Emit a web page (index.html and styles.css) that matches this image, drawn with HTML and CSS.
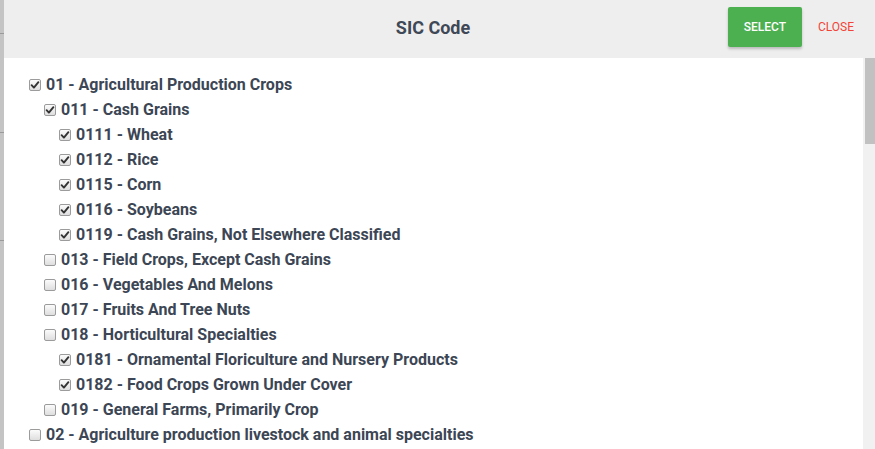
FILE: index.html
```html
<!DOCTYPE html>
<html>
<head>
<meta charset="utf-8">
<link rel="stylesheet" href="styles.css">
</head>
<body>
<div class="backdrop">
  <div class="bg-line l1"></div>
  <div class="bg-line l2"></div>
  <div class="bg-line l3"></div>
</div>
<div class="modal">
  <header class="head">
    <div></div>
    <h1 class="title">SIC Code</h1>
    <div class="actions">
      <button class="btn-select">SELECT</button>
      <button class="btn-close">CLOSE</button>
    </div>
  </header>
  <div class="body">
    <div class="content">
      <ul class="tree">
        <li>
          <label class="row"><span class="cb on"><svg viewBox="0 0 12 12" width="12" height="12"><path d="M2.6 6.2 L4.9 8.6 L9.4 3.2"/></svg></span><span class="txt">01 - Agricultural Production Crops</span></label>
          <ul class="sub">
            <li>
              <label class="row"><span class="cb on"><svg viewBox="0 0 12 12" width="12" height="12"><path d="M2.6 6.2 L4.9 8.6 L9.4 3.2"/></svg></span><span class="txt">011 - Cash Grains</span></label>
              <ul class="sub">
                <li><label class="row"><span class="cb on"><svg viewBox="0 0 12 12" width="12" height="12"><path d="M2.6 6.2 L4.9 8.6 L9.4 3.2"/></svg></span><span class="txt">0111 - Wheat</span></label></li>
                <li><label class="row"><span class="cb on"><svg viewBox="0 0 12 12" width="12" height="12"><path d="M2.6 6.2 L4.9 8.6 L9.4 3.2"/></svg></span><span class="txt">0112 - Rice</span></label></li>
                <li><label class="row"><span class="cb on"><svg viewBox="0 0 12 12" width="12" height="12"><path d="M2.6 6.2 L4.9 8.6 L9.4 3.2"/></svg></span><span class="txt">0115 - Corn</span></label></li>
                <li><label class="row"><span class="cb on"><svg viewBox="0 0 12 12" width="12" height="12"><path d="M2.6 6.2 L4.9 8.6 L9.4 3.2"/></svg></span><span class="txt">0116 - Soybeans</span></label></li>
                <li><label class="row"><span class="cb on"><svg viewBox="0 0 12 12" width="12" height="12"><path d="M2.6 6.2 L4.9 8.6 L9.4 3.2"/></svg></span><span class="txt">0119 - Cash Grains, Not Elsewhere Classified</span></label></li>
              </ul>
            </li>
            <li><label class="row"><span class="cb"></span><span class="txt">013 - Field Crops, Except Cash Grains</span></label></li>
            <li><label class="row"><span class="cb"></span><span class="txt">016 - Vegetables And Melons</span></label></li>
            <li><label class="row"><span class="cb"></span><span class="txt">017 - Fruits And Tree Nuts</span></label></li>
            <li>
              <label class="row"><span class="cb"></span><span class="txt">018 - Horticultural Specialties</span></label>
              <ul class="sub">
                <li><label class="row"><span class="cb on"><svg viewBox="0 0 12 12" width="12" height="12"><path d="M2.6 6.2 L4.9 8.6 L9.4 3.2"/></svg></span><span class="txt">0181 - Ornamental Floriculture and Nursery Products</span></label></li>
                <li><label class="row"><span class="cb on"><svg viewBox="0 0 12 12" width="12" height="12"><path d="M2.6 6.2 L4.9 8.6 L9.4 3.2"/></svg></span><span class="txt">0182 - Food Crops Grown Under Cover</span></label></li>
              </ul>
            </li>
            <li><label class="row"><span class="cb"></span><span class="txt">019 - General Farms, Primarily Crop</span></label></li>
          </ul>
        </li>
        <li><label class="row"><span class="cb"></span><span class="txt">02 - Agriculture production livestock and animal specialties</span></label></li>
      </ul>
    </div>
    <div class="scrollbar"><div class="thumb"></div></div>
  </div>
</div>
</body>
</html>
```
FILE: styles.css
```css
* { box-sizing: border-box; }
html, body { margin: 0; padding: 0; height: 100%; overflow: hidden; }
body {
  display: flex;
  font-family: Roboto, "Liberation Sans", sans-serif;
  background: #c2c2c2;
}
.backdrop {
  width: 4px;
  flex: none;
  background: #c4c4c4;
  display: flex;
  flex-direction: column;
}
.bg-line { height: 1px; background: #9a9a9a; }
.l1 { margin-top: 33px; }
.l2 { margin-top: 98px; }
.l3 { margin-top: 107px; }
.modal {
  flex: 1;
  height: 449px;
  display: flex;
  flex-direction: column;
  background: #fff;
  min-width: 0;
}
.head {
  height: 58px;
  flex: none;
  background: #eeeeee;
  display: grid;
  grid-template-columns: 1fr auto 1fr;
  align-items: center;
  padding: 0 21px 0 8px;
}
.title {
  margin: 0;
  font-size: 18px;
  font-weight: 700;
  color: #3e4856;
  padding-bottom: 3px;
}
.actions {
  display: flex;
  justify-content: flex-end;
  align-items: center;
  gap: 16px;
  padding-bottom: 4px;
}
.btn-select {
  font-family: Roboto, "Liberation Sans", sans-serif;
  width: 74px;
  height: 40px;
  border: none;
  border-radius: 2px;
  background: #4caf50;
  color: #fff;
  font-size: 12px;
  font-weight: 500;
  box-shadow: 0 2px 3px rgba(0,0,0,0.22);
  padding: 0;
}
.btn-close {
  font-family: Roboto, "Liberation Sans", sans-serif;
  border: none;
  background: none;
  color: #f44336;
  font-size: 12px;
  font-weight: 400;
  padding: 0;
}
.body {
  flex: 1;
  display: flex;
  min-height: 0;
}
.content {
  flex: 1;
  overflow: hidden;
  padding: 14px 0 0 25px;
}
.scrollbar {
  width: 12px;
  flex: none;
  background: #f1f1f1;
  padding-left: 2px;
}
.thumb {
  height: 86px;
  background: #c1c1c1;
}
.tree, .sub { list-style: none; margin: 0; padding: 0; }
.sub { padding-left: 15px; }
.row {
  display: flex;
  align-items: center;
  height: 25px;
  gap: 5px;
}
.cb {
  width: 12px;
  height: 12px;
  flex: none;
  border: 1px solid #9b9b9b;
  border-radius: 2px;
  background: linear-gradient(#fbfbfb, #dedede);
  display: flex;
  align-items: center;
  justify-content: center;
}
.cb svg { display: block; margin: -1px; }
.cb path {
  fill: none;
  stroke: #333;
  stroke-width: 1.9;
  stroke-linecap: round;
  stroke-linejoin: round;
}
.txt {
  font-size: 16px;
  font-weight: 700;
  color: #3c4654;
  white-space: nowrap;
}
```
